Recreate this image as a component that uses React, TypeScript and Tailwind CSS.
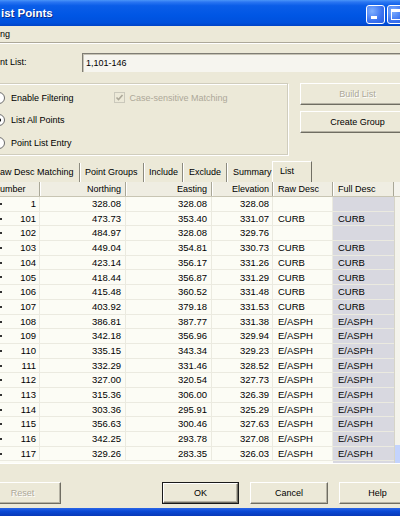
import React from "react";

const rows: string[][] = [
  ["1", "328.08", "328.08", "328.08", "", ""],
  ["101", "473.73", "353.40", "331.07", "CURB", "CURB"],
  ["102", "484.97", "328.08", "329.76", "", ""],
  ["103", "449.04", "354.81", "330.73", "CURB", "CURB"],
  ["104", "423.14", "356.17", "331.26", "CURB", "CURB"],
  ["105", "418.44", "356.87", "331.29", "CURB", "CURB"],
  ["106", "415.48", "360.52", "331.48", "CURB", "CURB"],
  ["107", "403.92", "379.18", "331.53", "CURB", "CURB"],
  ["108", "386.81", "387.77", "331.38", "E/ASPH", "E/ASPH"],
  ["109", "342.18", "356.96", "329.94", "E/ASPH", "E/ASPH"],
  ["110", "335.15", "343.34", "329.23", "E/ASPH", "E/ASPH"],
  ["111", "332.29", "331.46", "328.52", "E/ASPH", "E/ASPH"],
  ["112", "327.00", "320.54", "327.73", "E/ASPH", "E/ASPH"],
  ["113", "315.36", "306.00", "326.39", "E/ASPH", "E/ASPH"],
  ["114", "303.36", "295.91", "325.29", "E/ASPH", "E/ASPH"],
  ["115", "356.63", "300.46", "327.63", "E/ASPH", "E/ASPH"],
  ["116", "342.25", "293.78", "327.08", "E/ASPH", "E/ASPH"],
  ["117", "329.26", "283.35", "326.03", "E/ASPH", "E/ASPH"],
];

function Radio({ checked }: { checked?: boolean }) {
  return (
    <svg width="12" height="12" viewBox="0 0 12 12" className="shrink-0">
      <circle cx="6" cy="6" r="5.5" fill="#ffffff" stroke="#6b6b6b" />
      {checked && <circle cx="6" cy="6" r="2" fill="#000" />}
    </svg>
  );
}

function Btn({
  children,
  disabled,
  def,
  className = "",
}: {
  children: React.ReactNode;
  disabled?: boolean;
  def?: boolean;
  className?: string;
}) {
  return (
    <div
      className={
        "shrink-0 flex " +
        (def ? "border border-[#1a1a1a] " : "") +
        className
      }
    >
      <div
        className={
          "flex-1 flex items-center justify-center border-t border-l border-t-white border-l-white border-b border-r border-b-[#6f6d62] border-r-[#6f6d62] shadow-[inset_-1px_-1px_0_#b5b2a4] bg-[#ece9d8] " +
          (disabled
            ? "text-[#aca899] [text-shadow:1px_1px_0_#ffffff]"
            : "text-black")
        }
      >
        {children}
      </div>
    </div>
  );
}

export default function App() {
  const numCell = "flex items-center justify-end";
  return (
    <div className="w-[400px] h-[516px] overflow-hidden flex flex-col bg-[#ece9d8] text-black text-[9px] leading-none font-['Liberation_Sans',Arial,sans-serif]">
      {/* Title bar */}
      <div className="h-[26px] shrink-0 flex items-center justify-between bg-[linear-gradient(to_bottom,#4a95f8_0%,#2a75f2_8%,#0a5de8_22%,#0056e4_60%,#0050dc_88%,#0043c6_100%)]">
        <span className="text-white font-bold text-[11.5px] ml-[1px] mt-[1px] [text-shadow:1px_1px_0_#0a2d8c]">
          ist Points
        </span>
        <div className="flex gap-[2px] -mr-[6px] mt-[2px]">
          <div className="w-[19px] h-[19px] rounded-[3px] border border-white bg-[radial-gradient(circle_at_30%_30%,#7fb0ff,#3a72f0_60%,#2b5fe0)] flex items-end pl-[4px] pb-[4px]">
            <div className="w-[6px] h-[3px] bg-white" />
          </div>
          <div className="w-[19px] h-[19px] rounded-[3px] border border-white bg-[radial-gradient(circle_at_30%_30%,#7fb0ff,#3a72f0_60%,#2b5fe0)] flex items-start pl-[3px] pt-[3px]">
            <div className="w-[11px] h-[11px] border border-white border-t-[3px]" />
          </div>
        </div>
      </div>

      {/* Menu */}
      <div className="h-[16px] shrink-0 flex items-center">
        <span className="mt-[1px]">ng</span>
      </div>
      <div className="h-[2px] shrink-0 border-t border-t-[#aca899] border-b border-b-white" />

      {/* Point list */}
      <div className="mt-[9px] h-[19px] shrink-0 flex items-center">
        <span className="w-[82px] shrink-0">nt List:</span>
        <div className="flex-1 h-full -mr-[4px] bg-[#f6f5ef] border-t border-l border-t-[#7f7d74] border-l-[#7f7d74] shadow-[inset_1px_1px_0_#c6c3b5] flex items-center pl-[3px]">
          1,101-146
        </div>
      </div>

      {/* Group + buttons */}
      <div className="mt-[11px] h-[72px] shrink-0 flex">
        <div className="-ml-[10px] w-[298px] shrink-0 h-full border border-[#d0cdbd] shadow-[inset_1px_1px_0_#ffffff,1px_1px_0_#ffffff] flex">
          <div className="flex flex-col pl-[2px] pt-[8px] gap-[10px]">
            <div className="flex items-center gap-[6px] h-[12px]">
              <Radio />
              <span>Enable Filtering</span>
            </div>
            <div className="flex items-center gap-[6px] h-[12px]">
              <Radio checked />
              <span>List All Points</span>
            </div>
            <div className="flex items-center gap-[6px] h-[12px] mt-[1px]">
              <Radio />
              <span>Point List Entry</span>
            </div>
          </div>
          <div className="ml-[40px] mt-[8px] flex items-start gap-[5px]">
            <div className="w-[11px] h-[11px] border border-[#cac8bb] bg-[#ece9d8] flex items-center justify-center">
              <svg width="9" height="9" viewBox="0 0 9 9">
                <path d="M1.5 4.5 L3.5 6.5 L7.5 2" fill="none" stroke="#aca899" strokeWidth="1.6" />
              </svg>
            </div>
            <span className="text-[#aca899] mt-[2px]">Case-sensitive Matching</span>
          </div>
        </div>
        <div className="ml-[12px] shrink-0 flex flex-col gap-[6px]">
          <Btn disabled className="w-[115px] h-[22px]">Build List</Btn>
          <Btn className="w-[115px] h-[22px]">Create Group</Btn>
        </div>
      </div>

      {/* Tabs */}
      <div className="mt-[6px] h-[21px] shrink-0 flex items-end">
        <div className="w-[80px] h-[19px] flex items-center border-r border-r-[#8c8a7e] shadow-[1px_0_0_#ffffff]">
          <span>aw Desc Matching</span>
        </div>
        <div className="w-[64px] h-[19px] flex items-center pl-[5px] border-r border-r-[#8c8a7e] shadow-[1px_0_0_#ffffff]">
          Point Groups
        </div>
        <div className="w-[39px] h-[19px] flex items-center pl-[5px] border-r border-r-[#8c8a7e] shadow-[1px_0_0_#ffffff]">
          Include
        </div>
        <div className="w-[44px] h-[19px] flex items-center pl-[6px] border-r border-r-[#8c8a7e] shadow-[1px_0_0_#ffffff]">
          Exclude
        </div>
        <div className="w-[45px] h-[19px] flex items-center pl-[6px]">
          Summary
        </div>
        <div className="w-[40px] h-[21px] flex items-center pl-[7px] pb-[2px] border-t border-l border-t-white border-l-white border-r border-r-[#716f64]">
          List
        </div>
      </div>

      {/* Table */}
      <div className="h-[282px] shrink-0 flex flex-col border-b border-b-white overflow-hidden">
        <div className="h-[15px] shrink-0 flex bg-[#efede2] border-b border-b-[#c8c5b3]">
          <div className="w-[40px] flex items-center border-r border-r-[#a9a797]">umber</div>
          <div className="w-[86px] flex items-center justify-end pr-[4px] border-r border-r-[#a9a797] shadow-[inset_1px_0_0_#ffffff]">Northing</div>
          <div className="w-[86px] flex items-center justify-end pr-[4px] border-r border-r-[#a9a797] shadow-[inset_1px_0_0_#ffffff]">Easting</div>
          <div className="w-[61px] flex items-center justify-end pr-[3px] border-r border-r-[#a9a797] shadow-[inset_1px_0_0_#ffffff]">Elevation</div>
          <div className="w-[60px] flex items-center pl-[5px] border-r border-r-[#a9a797] shadow-[inset_1px_0_0_#ffffff]">Raw Desc</div>
          <div className="w-[61px] flex items-center pl-[5px] border-r border-r-[#a9a797] shadow-[inset_1px_0_0_#ffffff]">Full Desc</div>
          <div className="flex-1 bg-[#f4f3ec]" />
        </div>
        <div className="flex-1 flex">
          <div className="w-[394px] flex flex-col bg-[#fcfcf5]">
            {rows.map((r, i) => (
              <div key={i} className="h-[14.7px] shrink-0 flex border-b border-b-[#ebeae0] text-[9.5px]">
                <div className="w-[40px] relative flex items-center justify-end pr-[3px] border-r border-r-[#ebeae0]">
                  <span className="absolute left-0 top-[6px] w-[2px] h-[2px] bg-[#333]" />
                  {r[0]}
                </div>
                <div className={"w-[86px] pr-[4px] border-r border-r-[#ebeae0] " + numCell}>{r[1]}</div>
                <div className={"w-[86px] pr-[4px] border-r border-r-[#ebeae0] " + numCell}>{r[2]}</div>
                <div className={"w-[61px] pr-[3px] border-r border-r-[#ebeae0] " + numCell}>{r[3]}</div>
                <div className="w-[60px] flex items-center pl-[5px] border-r border-r-[#ebeae0]">{r[4]}</div>
                <div className="w-[61px] flex items-center pl-[5px] bg-[#d8d8e0]">{r[5]}</div>
              </div>
            ))}
            <div className="flex-1 flex">
              <div className="w-[333px]" />
              <div className="w-[61px] bg-[#d8d8e0]" />
            </div>
          </div>
          <div className="flex-1 flex flex-col bg-[#f4f3ec] border-l border-l-[#d6d4c8]">
            <div className="flex-1" />
            <div className="h-[18px] bg-[#c3d3fd]" />
          </div>
        </div>
      </div>

      {/* Bottom buttons */}
      <div className="mt-[18px] h-[22px] shrink-0 flex">
        <Btn disabled className="-ml-[16px] w-[77px] h-[22px]">Reset</Btn>
        <div className="ml-auto -mr-[16px] flex gap-[11px]">
          <Btn def className="w-[77px] h-[22px]">OK</Btn>
          <Btn className="w-[78px] h-[22px]">Cancel</Btn>
          <Btn className="w-[77px] h-[22px]">Help</Btn>
        </div>
      </div>
      <div className="flex-1" />
      <div className="h-[8px] shrink-0 bg-[linear-gradient(to_bottom,#2b66e6,#0a49d6_40%,#0838b8_100%)]" />
    </div>
  );
}
